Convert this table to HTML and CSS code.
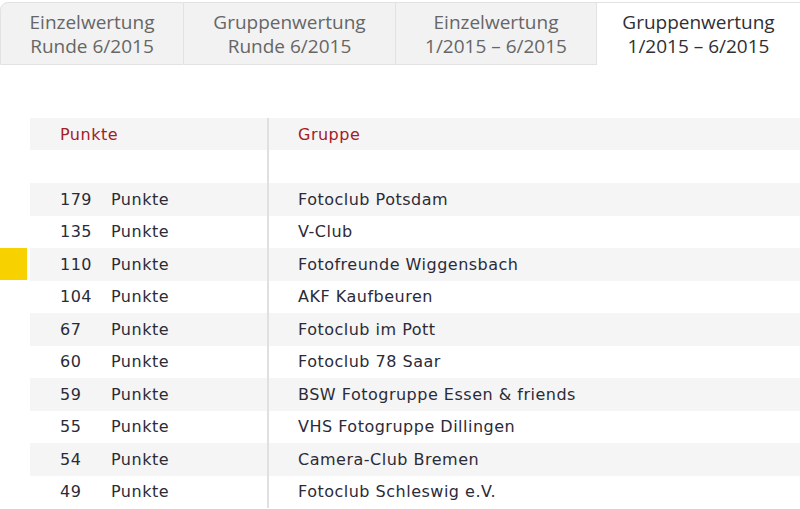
FILE: index.html
```html
<!DOCTYPE html>
<html lang="de">
<head>
<meta charset="utf-8">
<link rel="stylesheet" href="styles.css">
</head>
<body>
<div class="tabs">
  <div class="tab t1">Einzelwertung<br>Runde 6/2015</div>
  <div class="tab t2">Gruppenwertung<br>Runde 6/2015</div>
  <div class="tab t3">Einzelwertung<br>1/2015 – 6/2015</div>
  <div class="tab t4 active">Gruppenwertung<br>1/2015 – 6/2015</div>
</div>
<div class="wrap">
  <div class="marker-col"><div class="marker"></div></div>
  <div class="table">
    <div class="row head"><div class="c1">Punkte</div><div class="c2">Gruppe</div></div>
    <div class="row blank"><div class="c1"></div><div class="c2"></div></div>
    <div class="row odd"><div class="c1"><span class="n">179</span>Punkte</div><div class="c2">Fotoclub Potsdam</div></div>
    <div class="row"><div class="c1"><span class="n">135</span>Punkte</div><div class="c2">V-Club</div></div>
    <div class="row odd"><div class="c1"><span class="n">110</span>Punkte</div><div class="c2">Fotofreunde Wiggensbach</div></div>
    <div class="row"><div class="c1"><span class="n">104</span>Punkte</div><div class="c2">AKF Kaufbeuren</div></div>
    <div class="row odd"><div class="c1"><span class="n">67</span>Punkte</div><div class="c2">Fotoclub im Pott</div></div>
    <div class="row"><div class="c1"><span class="n">60</span>Punkte</div><div class="c2">Fotoclub 78 Saar</div></div>
    <div class="row odd"><div class="c1"><span class="n">59</span>Punkte</div><div class="c2">BSW Fotogruppe Essen &amp; friends</div></div>
    <div class="row"><div class="c1"><span class="n">55</span>Punkte</div><div class="c2">VHS Fotogruppe Dillingen</div></div>
    <div class="row odd"><div class="c1"><span class="n">54</span>Punkte</div><div class="c2">Camera-Club Bremen</div></div>
    <div class="row"><div class="c1"><span class="n">49</span>Punkte</div><div class="c2">Fotoclub Schleswig e.V.</div></div>
  </div>
</div>
</body>
</html>
```

FILE: styles.css
```css
html, body {
  margin: 0;
  padding: 0;
  background: #fff;
  overflow: hidden;
}
body {
  font-family: "Open Sans", "Liberation Sans", sans-serif;
}
.tabs {
  display: flex;
  margin-top: 2px;
  height: 63px;
}
.tab {
  box-sizing: border-box;
  height: 63px;
  background: #f2f2f2;
  border-top: 1px solid #e2e2e2;
  border-bottom: 1px solid #e2e2e2;
  border-right: 1px solid #e2e2e2;
  color: #666;
  font-size: 19px;
  line-height: 24px;
  text-align: center;
  padding-top: 7px;
}
.t1 { width: 184px; border-left: 1px solid #e2e2e2; border-top-left-radius: 8px; }
.t2 { width: 212px; }
.t3 { width: 201px; }
.t4 { flex: 1; }
.tab.active {
  background: #fff;
  color: #2f2f35;
  border-bottom-color: #fff;
  border-right: none;
}
.wrap {
  display: flex;
  margin-top: 53px;
}
.marker-col {
  width: 30px;
  padding-top: 130px;
}
.marker {
  width: 27px;
  height: 32px;
  background: #f7d100;
}
.table {
  flex: 1;
  font-family: "DejaVu Sans", sans-serif;
  font-size: 16px;
  letter-spacing: 0.5px;
  color: #2b2b38;
}
.row {
  display: grid;
  grid-template-columns: 237px 1fr;
  height: 32.5px;
  align-items: stretch;
}
.row.head { height: 32px; background: #f5f5f5; }
.row.blank { height: 33px; }
.row.odd { background: #f5f5f5; }
.c1, .c2 {
  display: flex;
  align-items: center;
}
.c1 { padding-left: 30px; }
.c2 {
  padding-left: 29px;
  border-left: 2px solid #e0e0e0;
}
.head .c1, .head .c2 { color: #a3201f; }
.n { display: inline-block; width: 51px; }
```
